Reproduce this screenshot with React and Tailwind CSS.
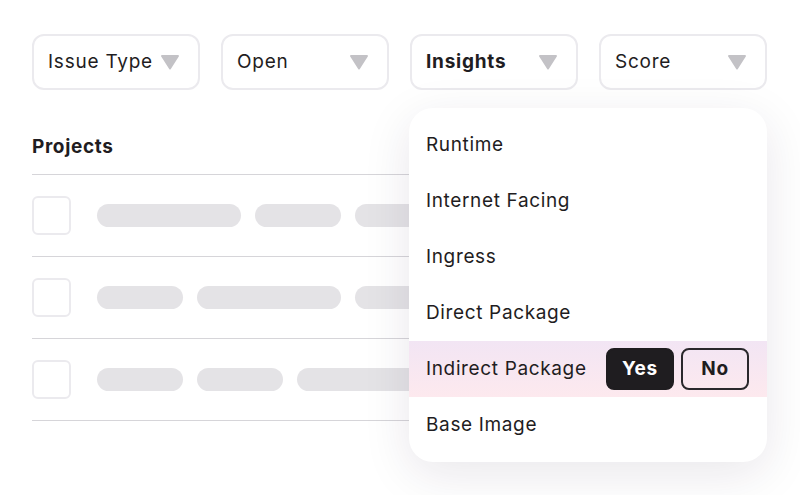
import { useState } from 'react'

const FILTERS = [
  { label: 'Issue Type' },
  { label: 'Open' },
  { label: 'Insights', active: true },
  { label: 'Score' },
]

const ROWS = [
  ['w-[144px]', 'w-[86px]', 'w-[120px]'],
  ['w-[86px]', 'w-[144px]', 'w-[120px]'],
  ['w-[86px]', 'w-[86px]', 'w-[144px]'],
]

const INSIGHTS = ['Runtime', 'Internet Facing', 'Ingress', 'Direct Package', 'Indirect Package', 'Base Image']

export default function App() {
  const [picked, setPicked] = useState('yes')

  return (
    <div className="relative h-[495px] w-[800px] overflow-hidden bg-white pl-8 pr-[33px] pt-[34px] font-['Inter',sans-serif] tracking-[0.04em] text-[#1f1d22]">
      <div className="grid grid-cols-4 gap-[21px]">
        {FILTERS.map(({ label, active }) => (
          <button
            key={label}
            className="flex h-14 items-center justify-between rounded-xl border-2 border-[#ebeaee] pl-[14px] pr-[18px] text-[19px] tracking-[0.04em]"
          >
            <span className={active ? 'font-bold' : ''}>{label}</span>
            <Caret />
          </button>
        ))}
      </div>

      <div className="mt-[30px]">
        <div className="flex h-[55px] items-center border-b border-[#d6d5d9] text-[19px] font-bold">Projects</div>
        {ROWS.map((pills, i) => (
          <div key={i} className="flex h-[82px] items-center gap-[14px] border-b border-[#d6d5d9]">
            <span className="mr-[12px] size-[39px] rounded-md border-2 border-[#ebeaee]" />
            {pills.map((w, j) => (
              <span key={j} className={`h-[23px] rounded-full bg-[#e4e3e6] ${w}`} />
            ))}
          </div>
        ))}
      </div>

      <div className="absolute left-[409px] top-[108px] w-[358px] overflow-hidden rounded-[24px] bg-white py-[9px] shadow-[0_12px_48px_rgba(40,20,60,0.10)]">
        {INSIGHTS.map((item) =>
          item === 'Indirect Package' ? (
            <div
              key={item}
              className="flex h-14 items-center bg-gradient-to-b from-[#f2e5f4] to-[#fde9ee] pl-[17px] text-[19px]"
            >
              <span className="w-[180px]">{item}</span>
              <button
                onClick={() => setPicked('yes')}
                className={`flex h-[42px] w-[68px] items-center justify-center rounded-lg border-2 text-[19px] font-bold tracking-[0.04em] ${
                  picked === 'yes' ? 'border-[#1f1d20] bg-[#1f1d20] text-white' : 'border-[#2a282c] text-[#1f1d20]'
                }`}
              >
                Yes
              </button>
              <button
                onClick={() => setPicked('no')}
                className={`ml-[7px] flex h-[42px] w-[68px] items-center justify-center rounded-lg border-2 text-[19px] font-bold tracking-[0.04em] ${
                  picked === 'no' ? 'border-[#1f1d20] bg-[#1f1d20] text-white' : 'border-[#2a282c] text-[#1f1d20]'
                }`}
              >
                No
              </button>
            </div>
          ) : (
            <div key={item} className="flex h-14 items-center pl-[17px] text-[19px]">
              {item}
            </div>
          )
        )}
      </div>
    </div>
  )
}

function Caret() {
  return (
    <svg viewBox="0 0 20 17" className="h-[17px] w-[20px]">
      <path d="M2 1h16a1 1 0 0 1 .8 1.6l-8 12.4a1 1 0 0 1-1.6 0L1.2 2.6A1 1 0 0 1 2 1z" fill="#c3c2c6" />
    </svg>
  )
}
